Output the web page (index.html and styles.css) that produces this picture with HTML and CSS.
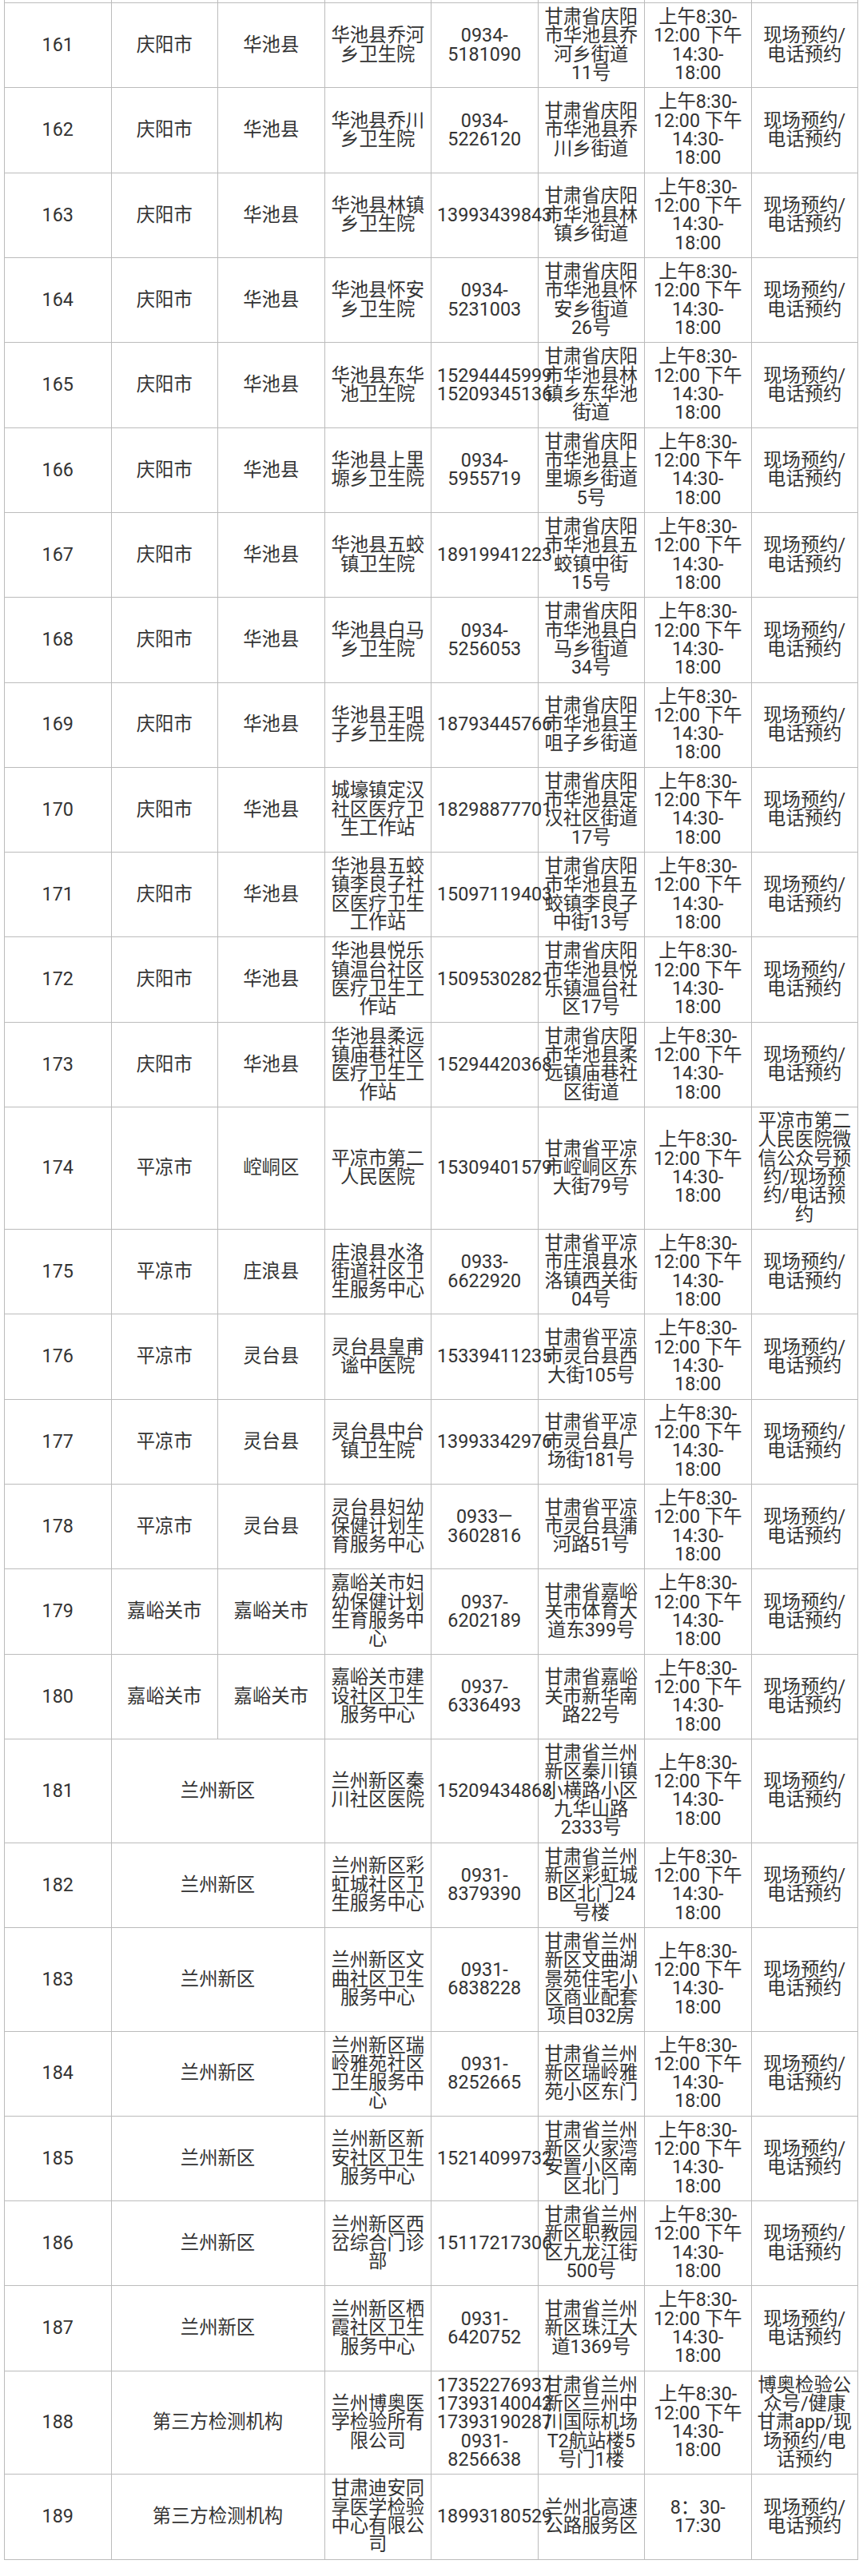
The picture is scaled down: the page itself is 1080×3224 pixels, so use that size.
FILE: index.html
```html
<!DOCTYPE html>
<html lang="zh-CN">
<head>
<meta charset="utf-8">
<title>检测机构列表</title>
<link rel="stylesheet" href="styles.css">
</head>
<body>
<table class="grid">
<colgroup><col><col><col><col><col><col><col><col></colgroup>
<tbody>
<tr class="cut"><td></td><td></td><td></td><td></td><td></td><td></td><td></td><td></td></tr>
<tr><td>161</td><td>庆阳市</td><td>华池县</td><td>华池县乔河乡卫生院</td><td>0934-<wbr>5181090</td><td>甘肃省庆阳市华池县乔河乡街道<span class="nb">11号</span></td><td>上午8:30-<wbr>12:00 下午14:30-<wbr>18:00</td><td>现场预约/电话预约</td></tr>
<tr><td>162</td><td>庆阳市</td><td>华池县</td><td>华池县乔川乡卫生院</td><td>0934-<wbr>5226120</td><td>甘肃省庆阳市华池县乔川乡街道</td><td>上午8:30-<wbr>12:00 下午14:30-<wbr>18:00</td><td>现场预约/电话预约</td></tr>
<tr><td>163</td><td>庆阳市</td><td>华池县</td><td>华池县林镇乡卫生院</td><td>13993439843</td><td>甘肃省庆阳市华池县林镇乡街道</td><td>上午8:30-<wbr>12:00 下午14:30-<wbr>18:00</td><td>现场预约/电话预约</td></tr>
<tr><td>164</td><td>庆阳市</td><td>华池县</td><td>华池县怀安乡卫生院</td><td>0934-<wbr>5231003</td><td>甘肃省庆阳市华池县怀安乡街道26号</td><td>上午8:30-<wbr>12:00 下午14:30-<wbr>18:00</td><td>现场预约/电话预约</td></tr>
<tr><td>165</td><td>庆阳市</td><td>华池县</td><td>华池县东华池卫生院</td><td>15294445999 15209345136</td><td>甘肃省庆阳市华池县林镇乡东华池街道</td><td>上午8:30-<wbr>12:00 下午14:30-<wbr>18:00</td><td>现场预约/电话预约</td></tr>
<tr><td>166</td><td>庆阳市</td><td>华池县</td><td>华池县上里塬乡卫生院</td><td>0934-<wbr>5955719</td><td>甘肃省庆阳市华池县上里塬乡街道5号</td><td>上午8:30-<wbr>12:00 下午14:30-<wbr>18:00</td><td>现场预约/电话预约</td></tr>
<tr><td>167</td><td>庆阳市</td><td>华池县</td><td>华池县五蛟镇卫生院</td><td>18919941223</td><td>甘肃省庆阳市华池县五蛟镇中街15号</td><td>上午8:30-<wbr>12:00 下午14:30-<wbr>18:00</td><td>现场预约/电话预约</td></tr>
<tr><td>168</td><td>庆阳市</td><td>华池县</td><td>华池县白马乡卫生院</td><td>0934-<wbr>5256053</td><td>甘肃省庆阳市华池县白马乡街道34号</td><td>上午8:30-<wbr>12:00 下午14:30-<wbr>18:00</td><td>现场预约/电话预约</td></tr>
<tr><td>169</td><td>庆阳市</td><td>华池县</td><td>华池县王咀子乡卫生院</td><td>18793445766</td><td>甘肃省庆阳市华池县王咀子乡街道</td><td>上午8:30-<wbr>12:00 下午14:30-<wbr>18:00</td><td>现场预约/电话预约</td></tr>
<tr><td>170</td><td>庆阳市</td><td>华池县</td><td>城壕镇定汉社区医疗卫生工作站</td><td>18298877701</td><td>甘肃省庆阳市华池县定汉社区街道17号</td><td>上午8:30-<wbr>12:00 下午14:30-<wbr>18:00</td><td>现场预约/电话预约</td></tr>
<tr><td>171</td><td>庆阳市</td><td>华池县</td><td>华池县五蛟镇李良子社区医疗卫生工作站</td><td>15097119403</td><td>甘肃省庆阳市华池县五蛟镇李良子中街13号</td><td>上午8:30-<wbr>12:00 下午14:30-<wbr>18:00</td><td>现场预约/电话预约</td></tr>
<tr><td>172</td><td>庆阳市</td><td>华池县</td><td>华池县悦乐镇温台社区医疗卫生工作站</td><td>15095302821</td><td>甘肃省庆阳市华池县悦乐镇温台社区17号</td><td>上午8:30-<wbr>12:00 下午14:30-<wbr>18:00</td><td>现场预约/电话预约</td></tr>
<tr><td>173</td><td>庆阳市</td><td>华池县</td><td>华池县柔远镇庙巷社区医疗卫生工作站</td><td>15294420368</td><td>甘肃省庆阳市华池县柔远镇庙巷社区街道</td><td>上午8:30-<wbr>12:00 下午14:30-<wbr>18:00</td><td>现场预约/电话预约</td></tr>
<tr><td>174</td><td>平凉市</td><td>崆峒区</td><td>平凉市第二人民医院</td><td>15309401579</td><td>甘肃省平凉市崆峒区东大街79号</td><td>上午8:30-<wbr>12:00 下午14:30-<wbr>18:00</td><td>平凉市第二人民医院微信公众号预约/现场预约/电话预约</td></tr>
<tr><td>175</td><td>平凉市</td><td>庄浪县</td><td>庄浪县水洛街道社区卫生服务中心</td><td>0933-<wbr>6622920</td><td>甘肃省平凉市庄浪县水洛镇西关街04号</td><td>上午8:30-<wbr>12:00 下午14:30-<wbr>18:00</td><td>现场预约/电话预约</td></tr>
<tr><td>176</td><td>平凉市</td><td>灵台县</td><td>灵台县皇甫谧中医院</td><td>15339411235</td><td>甘肃省平凉市灵台县西大街105号</td><td>上午8:30-<wbr>12:00 下午14:30-<wbr>18:00</td><td>现场预约/电话预约</td></tr>
<tr><td>177</td><td>平凉市</td><td>灵台县</td><td>灵台县中台镇卫生院</td><td>13993342976</td><td>甘肃省平凉市灵台县广场街181号</td><td>上午8:30-<wbr>12:00 下午14:30-<wbr>18:00</td><td>现场预约/电话预约</td></tr>
<tr><td>178</td><td>平凉市</td><td>灵台县</td><td>灵台县妇幼保健计划生育服务中心</td><td>0933—<wbr>3602816</td><td>甘肃省平凉市灵台县蒲河路51号</td><td>上午8:30-<wbr>12:00 下午14:30-<wbr>18:00</td><td>现场预约/电话预约</td></tr>
<tr><td>179</td><td>嘉峪关市</td><td>嘉峪关市</td><td>嘉峪关市妇幼保健计划生育服务中心</td><td>0937-<wbr>6202189</td><td>甘肃省嘉峪关市体育大道东399号</td><td>上午8:30-<wbr>12:00 下午14:30-<wbr>18:00</td><td>现场预约/电话预约</td></tr>
<tr><td>180</td><td>嘉峪关市</td><td>嘉峪关市</td><td>嘉峪关市建设社区卫生服务中心</td><td>0937-<wbr>6336493</td><td>甘肃省嘉峪关市新华南路22号</td><td>上午8:30-<wbr>12:00 下午14:30-<wbr>18:00</td><td>现场预约/电话预约</td></tr>
<tr><td>181</td><td colspan="2">兰州新区</td><td>兰州新区秦川社区医院</td><td>15209434868</td><td>甘肃省兰州新区秦川镇小横路小区九华山路2333号</td><td>上午8:30-<wbr>12:00 下午14:30-<wbr>18:00</td><td>现场预约/电话预约</td></tr>
<tr><td>182</td><td colspan="2">兰州新区</td><td>兰州新区彩虹城社区卫生服务中心</td><td>0931-<wbr>8379390</td><td>甘肃省兰州新区彩虹城B区北门24号楼</td><td>上午8:30-<wbr>12:00 下午14:30-<wbr>18:00</td><td>现场预约/电话预约</td></tr>
<tr><td>183</td><td colspan="2">兰州新区</td><td>兰州新区文曲社区卫生服务中心</td><td>0931-<wbr>6838228</td><td>甘肃省兰州新区文曲湖景苑住宅小区商业配套项目032房</td><td>上午8:30-<wbr>12:00 下午14:30-<wbr>18:00</td><td>现场预约/电话预约</td></tr>
<tr><td>184</td><td colspan="2">兰州新区</td><td>兰州新区瑞岭雅苑社区卫生服务中心</td><td>0931-<wbr>8252665</td><td>甘肃省兰州新区瑞岭雅苑小区东门</td><td>上午8:30-<wbr>12:00 下午14:30-<wbr>18:00</td><td>现场预约/电话预约</td></tr>
<tr><td>185</td><td colspan="2">兰州新区</td><td>兰州新区新安社区卫生服务中心</td><td>15214099732</td><td>甘肃省兰州新区火家湾安置小区南区北门</td><td>上午8:30-<wbr>12:00 下午14:30-<wbr>18:00</td><td>现场预约/电话预约</td></tr>
<tr><td>186</td><td colspan="2">兰州新区</td><td>兰州新区西岔综合门诊部</td><td>15117217306</td><td>甘肃省兰州新区职教园区九龙江街500号</td><td>上午8:30-<wbr>12:00 下午14:30-<wbr>18:00</td><td>现场预约/电话预约</td></tr>
<tr><td>187</td><td colspan="2">兰州新区</td><td>兰州新区栖霞社区卫生服务中心</td><td>0931-<wbr>6420752</td><td>甘肃省兰州新区珠江大道1369号</td><td>上午8:30-<wbr>12:00 下午14:30-<wbr>18:00</td><td>现场预约/电话预约</td></tr>
<tr><td>188</td><td colspan="2">第三方检测机构</td><td>兰州博奥医学检验所有限公司</td><td>17352276937 17393140042 17393190287 0931-<wbr>8256638</td><td>甘肃省兰州新区兰州中川国际机场T2航站楼5号门1楼</td><td>上午8:30-<wbr>12:00 下午14:30-<wbr>18:00</td><td>博奥检验公众号/健康甘肃app/现场预约/电话预约</td></tr>
<tr><td>189</td><td colspan="2">第三方检测机构</td><td>甘肃迪安同享医学检验中心有限公司</td><td>18993180529</td><td>兰州北高速公路服务区</td><td>8：30-<wbr>17:30</td><td>现场预约/电话预约</td></tr>
</tbody>
</table>
</body>
</html>
```

FILE: styles.css
```css
html, body {
  margin: 0;
  padding: 0;
  background: #ffffff;
}

body {
  font-family: Roboto, "Noto Sans CJK SC", sans-serif;
  color: #333333;
}

.grid {
  width: 1069px;
  margin: 0 0 0 5px;
  border-collapse: collapse;
  table-layout: fixed;
  font-size: 23.33px;
  line-height: 23.33px;
}

.grid col {
  width: 12.5%;
}

.grid td {
  border: 1px solid #bcbcbc;
  padding: 6px 7px;
  text-align: center;
  vertical-align: middle;
  word-break: normal;
}

.grid .cut td {
  border-top: none;
  height: 3px;
  padding: 0;
  font-size: 0;
  line-height: 0;
}

.nb {
  white-space: nowrap;
}
```
